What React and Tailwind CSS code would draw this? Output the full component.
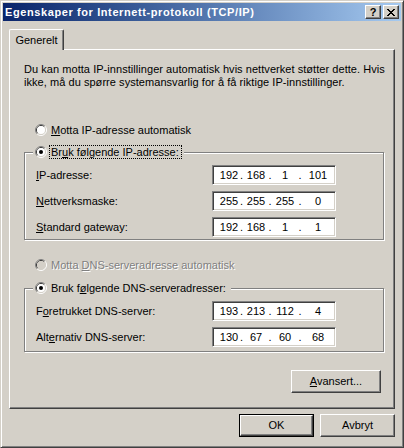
import React from "react";

const raised =
  "border border-t-white border-l-white border-r-[#404040] border-b-[#404040] shadow-[inset_-1px_-1px_0_#808080]";
const sunken =
  "border border-t-[#808080] border-l-[#808080] border-r-white border-b-white shadow-[inset_1px_1px_0_#404040,inset_-1px_-1px_0_#d4d0c8]";

function Radio({ checked, disabled }) {
  return (
    <svg width="12" height="12" viewBox="0 0 12 12" className="shrink-0 block">
      <path d="M2.11 9.89A5.5 5.5 0 0 1 9.89 2.11" stroke="#808080" fill="none" />
      <path d="M9.89 2.11A5.5 5.5 0 0 1 2.11 9.89" stroke="#ffffff" fill="none" />
      <path d="M2.82 9.18A4.5 4.5 0 0 1 9.18 2.82" stroke="#404040" fill="none" />
      <path d="M9.18 2.82A4.5 4.5 0 0 1 2.82 9.18" stroke="#d4d0c8" fill="none" />
      <circle cx="6" cy="6" r="4" fill={disabled ? "#d4d0c8" : "#ffffff"} />
      {checked && <circle cx="6" cy="6" r="2" fill={disabled ? "#808080" : "#000000"} />}
    </svg>
  );
}

function U({ children }) {
  return <span className="underline underline-offset-[1px]">{children}</span>;
}

function IpBox({ parts }) {
  return (
    <div className={`${sunken} w-[124px] h-[20px] bg-white flex items-center pl-[5px] leading-[14px]`}>
      <span className="w-[22px] text-center">{parts[0]}</span>
      <span className="w-[6px]">.</span>
      <span className="w-[20px] text-center">{parts[1]}</span>
      <span className="w-[8px] text-center">.</span>
      <span className="w-[22px] text-center">{parts[2]}</span>
      <span className="w-[8px] text-center">.</span>
      <span className="w-[28px] text-center">{parts[3]}</span>
    </div>
  );
}

function Row({ label, parts }) {
  return (
    <div className="flex items-center h-[20px] mt-[6px]">
      <div className="w-[176px]">{label}</div>
      <IpBox parts={parts} />
    </div>
  );
}

function Group({ legend, focus, children, pb }) {
  return (
    <div
      className={`ml-[14px] w-[360px] border border-[#808080] shadow-[1px_1px_0_#ffffff,inset_1px_1px_0_#ffffff] ${pb}`}
    >
      <div className="-mt-[8px] ml-[8px] w-fit h-[14px] bg-[#d4d0c8] px-[2px] flex items-center">
        <Radio checked />
        <span
          className={`ml-[2px] border border-dotted ${focus ? "border-black" : "border-transparent"} px-px leading-[12px] pr-[2px]`}
        >
          {legend}
        </span>
      </div>
      <div className="pl-[11px]">{children}</div>
    </div>
  );
}

function Button({ children, isDefault, w }) {
  if (isDefault) {
    return (
      <div className={`border border-black ${w} h-[23px]`}>
        <div className={`${raised} w-full h-full flex items-center justify-center`}>{children}</div>
      </div>
    );
  }
  return (
    <div className={`${raised} ${w} h-[23px] flex items-center justify-center`}>{children}</div>
  );
}

export default function App() {
  return (
    <div
      className="w-[404px] h-[448px] bg-[#d4d0c8] border border-t-[#d4d0c8] border-l-[#d4d0c8] border-r-[#404040] border-b-[#404040] shadow-[inset_1px_1px_0_#ffffff,inset_-1px_-1px_0_#808080] p-[2px] flex flex-col text-[11px] text-black"
      style={{ fontFamily: '"Liberation Sans", Arial, sans-serif' }}
    >
      {/* Title bar */}
      <div className="h-[18px] shrink-0 flex items-center bg-linear-to-r from-[#0a246a] to-[#a6caf0]">
        <div className="pl-[2px] text-white font-bold text-[11px] leading-[14px] tracking-[0.6px] whitespace-nowrap">
          Egenskaper for Internett-protokoll (TCP/IP)
        </div>
        <div className="ml-auto flex items-center mr-[2px]">
          <div className={`${raised} bg-[#d4d0c8] w-[16px] h-[14px] flex items-center justify-center font-bold text-[11px] leading-[10px]`}>
            ?
          </div>
          <div className={`${raised} bg-[#d4d0c8] w-[16px] h-[14px] ml-[2px] flex items-center justify-center`}>
            <svg width="8" height="7" viewBox="0 0 8 7" shapeRendering="crispEdges">
              <path
                fill="#000"
                d="M0 0h2v1H0zM6 0h2v1H6zM1 1h2v1H1zM5 1h2v1H5zM2 2h4v1H2zM3 3h2v1H3zM2 4h4v1H2zM1 5h2v1H1zM5 5h2v1H5zM0 6h2v1H0zM6 6h2v1H6z"
              />
            </svg>
          </div>
        </div>
      </div>

      {/* Tab */}
      <div className="mt-[8px] ml-[6px] w-[55px] h-[21px] -mb-px relative z-10 bg-[#d4d0c8] border-t border-l border-r border-t-white border-l-white border-r-[#404040] shadow-[inset_-1px_0_0_#808080] rounded-t-[2px] flex items-center justify-center">
        Generelt
      </div>

      {/* Panel */}
      <div className="mx-[6px] h-[360px] shrink-0 border border-t-white border-l-white border-r-[#404040] border-b-[#404040] shadow-[inset_-1px_-1px_0_#808080] flex flex-col">
        <div className="ml-[14px] mt-[13px] leading-[13px] whitespace-nowrap tracking-[0.05px]">
          Du kan motta IP-innstillinger automatisk hvis nettverket støtter dette. Hvis
          <br />
          ikke, må du spørre systemansvarlig for å få riktige IP-innstillinger.
        </div>

        <div className="ml-[25px] mt-[34px] h-[14px] flex items-center gap-[4px]">
          <Radio />
          <span>
            <U>M</U>otta IP-adresse automatisk
          </span>
        </div>

        <div className="mt-[15px]">
          <Group
            focus
            pb="pb-[2px]"
            legend={
              <>
                Br<U>u</U>k følgende IP-adresse:
              </>
            }
          >
            <Row label={<><U>I</U>P-adresse:</>} parts={["192", "168", "1", "101"]} />
            <Row label={<><U>N</U>ettverksmaske:</>} parts={["255", "255", "255", "0"]} />
            <Row label={<><U>S</U>tandard gateway:</>} parts={["192", "168", "1", "1"]} />
          </Group>
        </div>

        <div className="ml-[25px] mt-[18px] h-[14px] flex items-center gap-[4px] text-[#808080] [text-shadow:1px_1px_0_#ffffff]">
          <Radio disabled />
          <span>
            Motta <U>D</U>NS-serveradresse automatisk
          </span>
        </div>

        <div className="mt-[16px]">
          <Group
            pb="pb-[4px]"
            legend={
              <>
                Bruk f<U>ø</U>lgende DNS-serveradresser:
              </>
            }
          >
            <Row label={<>F<U>o</U>retrukket DNS-server:</>} parts={["193", "213", "112", "4"]} />
            <Row label={<>Alt<U>e</U>rnativ DNS-server:</>} parts={["130", "67", "60", "68"]} />
          </Group>
        </div>

        <div className="mt-[18px] flex justify-end mr-[13px]">
          <Button w="w-[90px]">
            <span>
              <U>A</U>vansert...
            </span>
          </Button>
        </div>
      </div>

      {/* Bottom buttons */}
      <div className="mt-[5px] flex justify-end gap-[6px] mr-[6px]">
        <Button isDefault w="w-[75px]">OK</Button>
        <Button w="w-[75px]">Avbryt</Button>
      </div>
    </div>
  );
}
